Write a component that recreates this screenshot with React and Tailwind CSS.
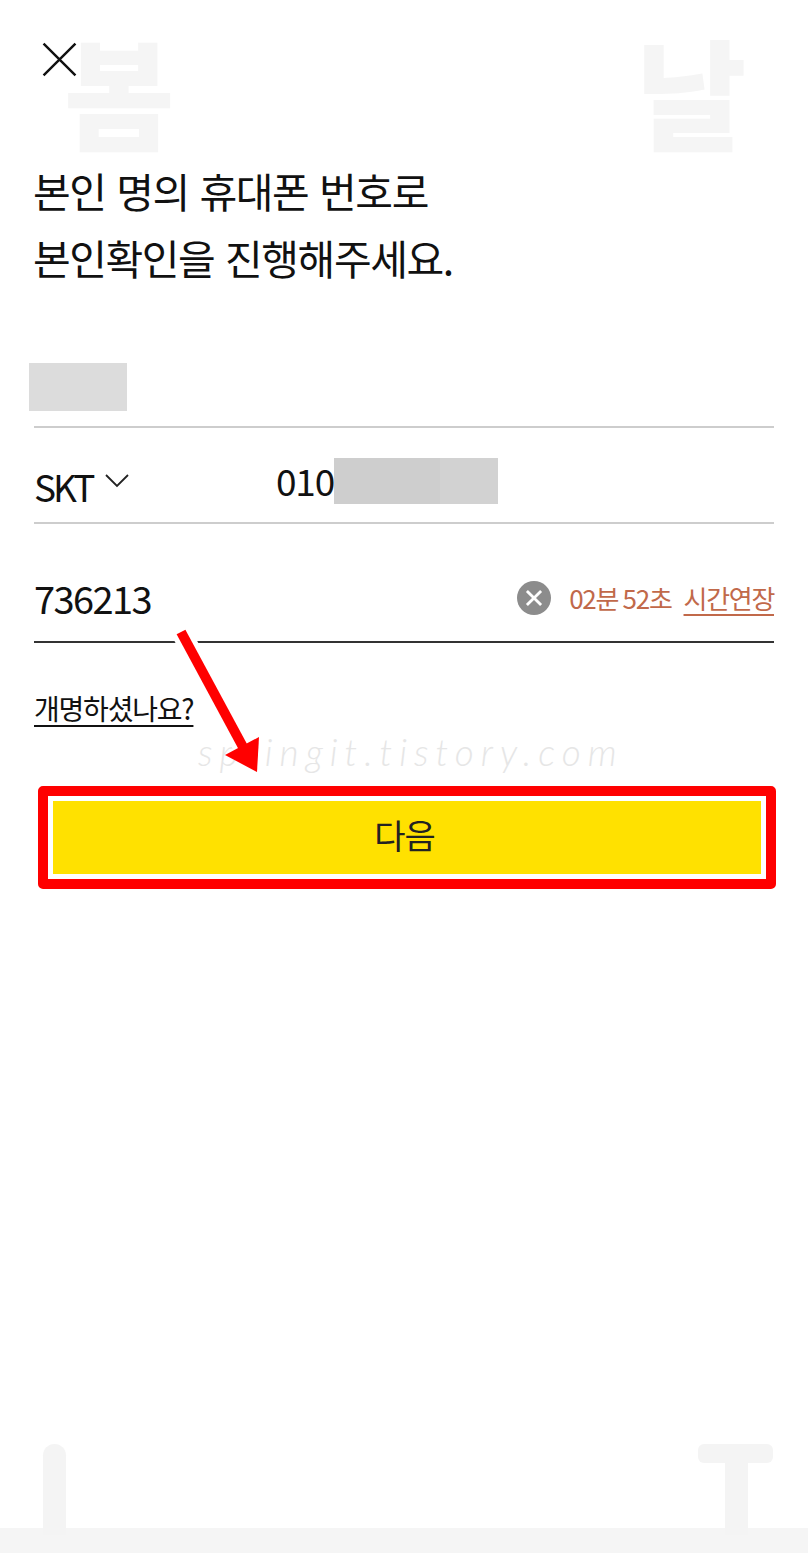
const KR = "font-['Noto_Sans_CJK_KR','Noto_Sans',sans-serif]";

function CloseIcon({ size, strokeWidth }) {
  return (
    <svg width={size} height={size} viewBox="0 0 24 24" fill="none" stroke="currentColor" strokeWidth={strokeWidth}>
      <path d="M3.5 3.5 L20.5 20.5 M20.5 3.5 L3.5 20.5" />
    </svg>
  );
}

function Watermarks() {
  return (
    <>
      <span className={`absolute left-[64px] top-[30px] text-[120px] leading-[120px] font-black text-[#f5f5f5] ${KR}`}>봄</span>
      <span className={`absolute left-[636px] top-[30px] text-[120px] leading-[120px] font-black text-[#f5f5f5] ${KR}`}>날</span>
      <div className="absolute left-[43px] top-[1444px] w-[23px] h-[91px] rounded-t-full bg-[#f4f4f4]" />
      <div className="absolute left-[698px] top-[1444px] w-[75px] h-[19px] rounded-md bg-[#f4f4f4]" />
      <div className="absolute left-[725px] top-[1463px] w-[23px] h-[72px] bg-[#f4f4f4]" />
      <span className="absolute left-[198px] top-[730px] text-[37px] leading-[44px] italic tracking-[7px] text-[#e6e6e6] font-['Lato',sans-serif] font-light whitespace-nowrap">
        springit.tistory.com
      </span>
    </>
  );
}

function Arrow() {
  return (
    <svg className="absolute left-[160px] top-[625px]" width="110" height="155" viewBox="0 0 110 155">
      <path d="M21 7 L83 122" stroke="#ffffff" strokeWidth="20" />
      <path d="M21 7 L83 122" stroke="#ff0000" strokeWidth="10" />
      <polygon points="99,112 65,130 97,147" fill="#ff0000" />
    </svg>
  );
}

export default function App() {
  return (
    <div className={`relative w-[808px] h-[1553px] overflow-hidden bg-white flex flex-col text-[#111] ${KR}`}>
      <Watermarks />

      <div className="relative flex flex-col flex-1 px-[34px]">
        <button className="mt-[37px] ml-[3px] w-[45px] h-[45px] flex items-center justify-center text-[#111]">
          <CloseIcon size={45} strokeWidth={1.3} />
        </button>

        <h1 className="mt-[75px] ml-[-1px] text-[41px] leading-[67px] font-normal tracking-[-1.45px] [word-spacing:3px] whitespace-nowrap">
          <span className="block">본인 명의 휴대폰 번호로</span>
          <span className="block">본인확인을 진행해주세요.</span>
        </h1>

        <div className="mt-[50px] h-[87px] border-b-2 border-[#cdcdcd] pt-[22px] -mb-[1px]">
          <div className="ml-[-5px] w-[98px] h-[48px] bg-[#dcdcdc]" />
        </div>

        <div className="h-[97px] border-b-2 border-[#cdcdcd] flex">
          <div className="w-[242px] flex items-start pt-[32px]">
            <span className="text-[37px] leading-[54px] tracking-[-3px]">SKT</span>
            <svg className="ml-[12px] mt-[14px]" width="26" height="16" viewBox="0 0 26 16" fill="none" stroke="#222" strokeWidth="1.8">
              <path d="M2 2 L13 13 L24 2" />
            </svg>
          </div>
          <div className="flex items-start pt-[27px]">
            <span className="text-[37px] leading-[52px] tracking-[-1.2px]">010</span>
            <div className="mt-[4px] flex h-[46px]">
              <div className="w-[106px] bg-[#cecece]" />
              <div className="w-[58px] bg-[#d2d2d2]" />
            </div>
          </div>
        </div>

        <div className="h-[119px] border-b-2 border-[#333] flex items-start justify-between">
          <span className="mt-[45px] text-[38px] leading-[58px] tracking-[-1.6px]">736213</span>
          <div className="mt-[55px] flex items-center text-[#c1694a]">
            <span className="w-[34px] h-[34px] rounded-full bg-[#8c8c8c] flex items-center justify-center text-white">
              <CloseIcon size={20} strokeWidth={3.4} />
            </span>
            <span className="ml-[18px] text-[26px] leading-[38px] tracking-[-1.3px]">02분 52초</span>
            <a className="ml-[12px] text-[26px] leading-[38px] tracking-[-1.3px] underline underline-offset-[5px]">시간연장</a>
          </div>
        </div>

        <a className="mt-[43px] text-[28px] leading-[44px] tracking-[-1.2px] underline underline-offset-[5px] self-start text-[#111]">개명하셨나요?</a>

        <div className="mt-[56px] ml-[4px] w-[738px] h-[103px] rounded-[5px] border-[10px] border-[#ff0000] p-[5px] bg-white">
          <button className="w-full h-full pb-[6px] pr-[5px] bg-[#ffe100] text-[34px] tracking-[-1px] text-[#222] flex items-center justify-center">
            다음
          </button>
        </div>
      </div>

      <div className="h-[25px] shrink-0 bg-[#f5f5f5]" />
      <Arrow />
    </div>
  );
}
